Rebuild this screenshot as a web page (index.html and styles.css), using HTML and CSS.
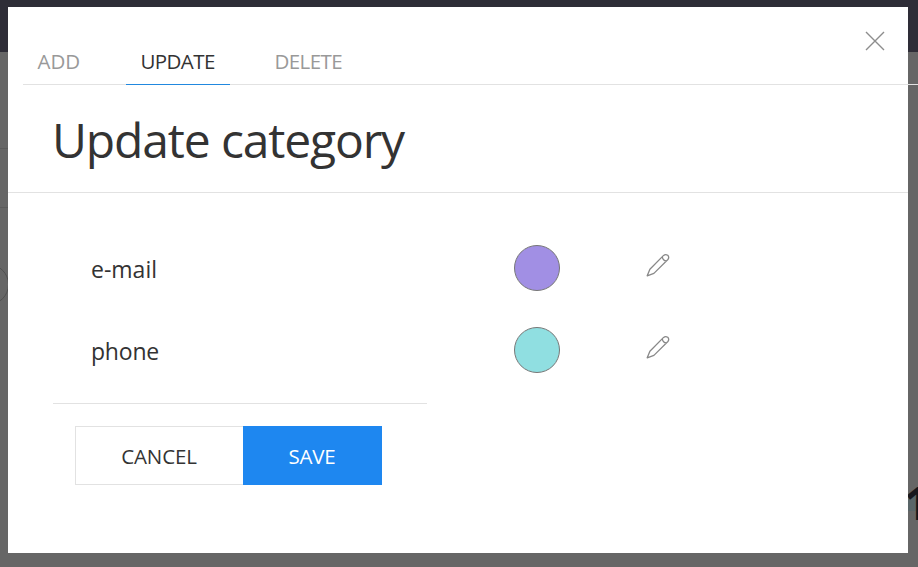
FILE: index.html
```html
<!DOCTYPE html>
<html lang="en">
<head>
<meta charset="utf-8">
<title>Update category</title>
<link rel="stylesheet" href="styles.css">
</head>
<body>
<div class="backdrop" aria-hidden="true">
  <div class="topbar"></div>
  <div class="line line-a"></div>
  <div class="line line-b"></div>
  <div class="ring"></div>
  <div class="tint"></div>
  <div class="count">1</div>
</div>
<main class="modal">
  <button class="close" aria-label="Close"><svg width="20" height="20" viewBox="0 0 20 20"><path d="M1 1 19 19M19 1 1 19"/></svg></button>
  <nav class="tabs">
    <a class="tab tab-add"><span>ADD</span></a>
    <a class="tab tab-update active"><span>UPDATE</span></a>
    <a class="tab tab-delete"><span>DELETE</span></a>
  </nav>
  <header class="heading"><h1>Update category</h1></header>
  <section class="rows">
    <div class="row">
      <span class="name">e-mail</span>
      <span class="swatch purple"></span>
      <svg class="pencil" width="24" height="24" viewBox="0 0 24 24"><path d="M1.2 22.8 3.9 16.2 17.6 2.4Q19.5.8 21.7 2.2 23.6 4.4 21.9 6.5L7.9 20.4ZM16.3 3.8Q16.8 7.4 20.4 8"/></svg>
    </div>
    <div class="row">
      <span class="name name-phone">phone</span>
      <span class="swatch teal"></span>
      <svg class="pencil" width="24" height="24" viewBox="0 0 24 24"><path d="M1.2 22.8 3.9 16.2 17.6 2.4Q19.5.8 21.7 2.2 23.6 4.4 21.9 6.5L7.9 20.4ZM16.3 3.8Q16.8 7.4 20.4 8"/></svg>
    </div>
  </section>
  <footer class="actions">
    <button class="btn cancel">CANCEL</button>
    <button class="btn save">SAVE</button>
  </footer>
</main>
</body>
</html>
```
FILE: styles.css
```css
* { box-sizing: border-box; }
body {
  margin: 0;
  width: 918px;
  height: 567px;
  padding: 7px 10px 14px 8px;
  overflow: hidden;
  background: #666;
  color: #333;
  font-family: "Open Sans", "Noto Sans", sans-serif;
}
.backdrop { position: absolute; inset: 0; overflow: hidden; }
.topbar { height: 52px; background: #2e2d37; }
.line { position: absolute; left: 0; width: 8px; height: 1px; background: #5b5b5b; }
.line-a { top: 148px; }
.line-b { top: 207px; }
.ring { position: absolute; left: -32px; top: 264px; width: 41px; height: 41px; border: 1px solid #505050; border-radius: 50%; }
.tint { position: absolute; left: 908px; top: 493px; width: 8px; height: 18px; background: #596568; }
.count { position: absolute; left: 904px; top: 473px; font-size: 46px; line-height: 58px; font-weight: 700; color: #17171d; }
.modal { position: relative; height: 546px; background: #fff; }
.close { position: absolute; left: 856.5px; top: 23.5px; width: 20px; height: 20px; padding: 0; border: 0; background: none; }
.close svg { display: block; fill: none; stroke: #8d8d8d; stroke-width: 1.4; }
.tabs { display: flex; height: 78px; width: 895px; margin-left: 15px; padding-top: 35px; border-bottom: 1px solid #e2e2e2; }
.tab { height: 43px; padding-left: 14.5px; font-size: 20.5px; line-height: 38px; color: #999; white-space: nowrap; }
.tab-add { width: 72px; margin-right: 31px; letter-spacing: 0; }
.tab-update { width: 104px; margin-right: 30px; letter-spacing: -0.6px; }
.tab-delete { width: 97px; letter-spacing: -0.6px; }
.active { color: #333; border-bottom: 1px solid #2188df; }
.heading { height: 108px; padding: 21px 44px 0; border-bottom: 1px solid #e2e2e2; }
h1 { margin: 0; font-size: 48px; line-height: 68px; font-weight: 400; letter-spacing: -1.15px; }
.rows { height: 211px; width: 374px; margin-left: 45px; padding-top: 34px; border-bottom: 1px solid #e2e2e2; }
.row { display: grid; grid-template-columns: 423px 132px 24px; width: 700px; height: 82px; padding: 18px 0 0 38px; }
.name { font-size: 23px; line-height: 48px; }
.name-phone { letter-spacing: -0.2px; }
.swatch { width: 46px; height: 46px; border: 1px solid #777; border-radius: 50%; }
.purple { background: #a18fe4; }
.teal { background: #90dfe1; }
.pencil { margin-top: 8px; fill: none; stroke: #888; stroke-width: 1.3; stroke-linejoin: round; }
.actions { display: flex; padding: 22px 67px 0; }
.btn { height: 59px; padding: 1px 0 0; font: 400 20.5px/28px "Open Sans", "Noto Sans", sans-serif; border: 1px solid #e2e2e2; background: #fff; color: #333; }
.cancel { width: 168px; padding-right: 1px; border-right: 0; letter-spacing: -0.1px; }
.save { width: 139px; padding-right: 1px; background: #1e87f0; border-color: #1e87f0; color: #fff; letter-spacing: -0.2px; }
```
